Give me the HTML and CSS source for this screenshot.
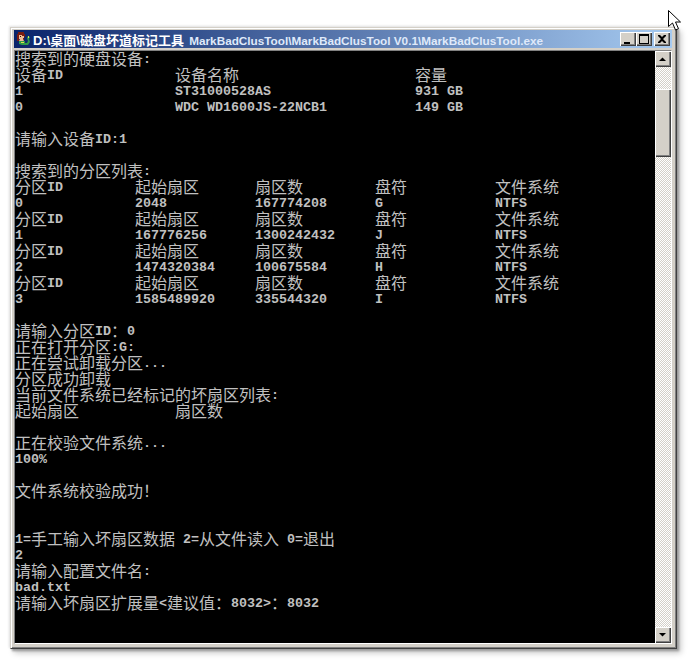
FILE: index.html
```html
<!DOCTYPE html>
<html lang="zh-CN">
<head>
<meta charset="utf-8">
<title>MarkBadClusTool</title>
<link rel="stylesheet" href="styles.css">
</head>
<body>
<div class="window">
  <div class="titlebar">
    <svg class="appicon" width="16" height="16" viewBox="0 0 16 16">
      <path d="M3 1h6v2h1v3H9v3H7V4H4v6H2V3h1z" fill="#7a1c10"/>
      <path d="M4 4h3v1h2v2H8v1l1 2H4l1-2H4z" fill="#f0bc94"/>
      <rect x="5" y="5" width="1" height="1" fill="#301008"/>
      <path d="M4 10h6v2h2l1-2-1-3 1-2 2 1-1 2 1 3-2 3H7l-3-1z" fill="#2f9a48"/>
      <path d="M13 5h1v2h-1zM6 11h3v1H6z" fill="#d8e050"/>
    </svg>
    <span class="titletext"><span class="tc">D:\桌面\磁盘坏道标记工具</span> MarkBadClusTool\MarkBadClusTool V0.1\MarkBadClusTool.exe</span>
    <div class="capbtns">
      <div class="capbtn"><svg width="16" height="14" viewBox="0 0 16 14"><rect x="4" y="10" width="6" height="2" fill="#000"/></svg></div>
      <div class="capbtn"><svg width="16" height="14" viewBox="0 0 16 14"><path d="M3 2h10v10H3z M4 4v7h8V4z" fill="#000" fill-rule="evenodd"/></svg></div>
      <div class="capbtn capclose"><svg width="16" height="14" viewBox="0 0 16 14"><path d="M4 3h2l2 2 2-2h2v1l-3 3 3 3v1h-2l-2-2-2 2H4v-1l3-3-3-3z" fill="#000"/></svg></div>
    </div>
  </div>
  <div class="client">
    <div class="console">
      <div class="ln"><i>搜索到的硬盘设备</i>:</div>
      <div class="ln"><i>设备</i>ID              <i>设备名称</i>                      <i>容量</i></div>
      <div class="ln">1                   ST31000528AS                  931 GB</div>
      <div class="ln">0                   WDC WD1600JS-22NCB1           149 GB</div>
      <div class="ln"></div>
      <div class="ln"><i>请输入设备</i>ID:1</div>
      <div class="ln"></div>
      <div class="ln"><i>搜索到的分区列表</i>:</div>
      <div class="ln"><i>分区</i>ID         <i>起始扇区</i>       <i>扇区数</i>         <i>盘符</i>           <i>文件系统</i></div>
      <div class="ln">0              2048           167774208      G              NTFS</div>
      <div class="ln"><i>分区</i>ID         <i>起始扇区</i>       <i>扇区数</i>         <i>盘符</i>           <i>文件系统</i></div>
      <div class="ln">1              167776256      1300242432     J              NTFS</div>
      <div class="ln"><i>分区</i>ID         <i>起始扇区</i>       <i>扇区数</i>         <i>盘符</i>           <i>文件系统</i></div>
      <div class="ln">2              1474320384     100675584      H              NTFS</div>
      <div class="ln"><i>分区</i>ID         <i>起始扇区</i>       <i>扇区数</i>         <i>盘符</i>           <i>文件系统</i></div>
      <div class="ln">3              1585489920     335544320      I              NTFS</div>
      <div class="ln"></div>
      <div class="ln"><i>请输入分区</i>ID<i>：</i>0</div>
      <div class="ln"><i>正在打开分区</i>:G:</div>
      <div class="ln"><i>正在尝试卸载分区</i>...</div>
      <div class="ln"><i>分区成功卸载</i></div>
      <div class="ln"><i>当前文件系统已经标记的坏扇区列表</i>:</div>
      <div class="ln"><i>起始扇区</i>            <i>扇区数</i></div>
      <div class="ln"></div>
      <div class="ln"><i>正在校验文件系统</i>...</div>
      <div class="ln">100%</div>
      <div class="ln"></div>
      <div class="ln"><i>文件系统校验成功！</i></div>
      <div class="ln"></div>
      <div class="ln"></div>
      <div class="ln">1=<i>手工输入坏扇区数据</i> 2=<i>从文件读入</i> 0=<i>退出</i></div>
      <div class="ln">2</div>
      <div class="ln"><i>请输入配置文件名</i>:</div>
      <div class="ln">bad.txt</div>
      <div class="ln"><i>请输入坏扇区扩展量</i>&lt;<i>建议值</i><i>：</i>8032&gt;<i>：</i>8032</div>
    </div>
    <div class="scrollbar">
      <div class="sbtn"><svg width="16" height="16" viewBox="0 0 16 16"><path d="M4 10h7L7.500 6.500z" fill="#000"/></svg></div>
      <div class="strack strack-top"></div>
      <div class="sthumb"></div>
      <div class="strack strack-bottom"></div>
      <div class="sbtn"><svg width="16" height="16" viewBox="0 0 16 16"><path d="M4 6h7L7.500 9.500z" fill="#000"/></svg></div>
    </div>
  </div>
</div>
<svg class="cursor" width="13" height="22" viewBox="0 0 13 22">
  <path d="M.5.500v16l4-3.500 3 7 3-1.300-3-6.700h5z" fill="#fff" stroke="#000"/>
</svg>
</body>
</html>
```

FILE: styles.css
```css
html, body {
  margin: 0;
  padding: 0;
  background: #fff;
}
body {
  width: 692px;
  height: 664px;
  overflow: hidden;
  position: relative;
}
.window {
  box-sizing: border-box;
  width: 667px;
  height: 622px;
  margin: 27px 0 0 10px;
  padding: 2px 4px 4px 3px;
  background: #d4d0c8;
  border: 1px solid;
  border-color: #d4d0c8 #404040 #404040 #d4d0c8;
  box-shadow: inset 1px 1px 0 #fff, inset -1px -1px 0 #808080, 2px 2px 2px #9a9a9a, 4px 4px 6px #c8c8c8, -1px -1px 2px #e4e4e4;
  display: flex;
  flex-direction: column;
}
.titlebar {
  height: 18px;
  flex: none;
  margin-bottom: 2px;
  display: flex;
  align-items: center;
  padding-left: 1px;
  background: linear-gradient(to right, #0a246a, #a6caf0);
  font-family: "Liberation Sans", "Noto Sans CJK SC", sans-serif;
  font-weight: bold;
  font-size: 11.75px;
  color: #fff;
  white-space: nowrap;
}
.appicon {
  flex: none;
  margin-right: 2px;
}
.titletext {
  flex: 1;
  color: #dfe9fa;
}
.tc {
  color: #fff;
  font-size: 13px;
  margin-right: 2px;
}
.capbtns {
  display: flex;
  flex: none;
  margin-right: 2px;
}
.capbtn {
  box-sizing: border-box;
  width: 16px;
  height: 14px;
  background: #d4d0c8;
  box-shadow: inset 1px 1px 0 #fff, inset -1px -1px 0 #404040, inset -2px -2px 0 #808080;
}
.capbtn svg {
  display: block;
}
.capclose {
  margin-left: 2px;
}
.client {
  flex: 1;
  min-height: 0;
  display: flex;
  border: 1px solid;
  border-color: #808080 #fff #fff #808080;
}
.console {
  flex: 1;
  box-sizing: border-box;
  background: #000;
  color: #c0c0c0;
  font-family: "Liberation Mono", monospace;
  font-weight: bold;
  font-size: 13.333px;
  line-height: 16px;
  overflow: hidden;
}
.ln {
  height: 16px;
  line-height: 18px;
  white-space: pre;
}
.ln i {
  font-family: "Noto Sans CJK SC", sans-serif;
  font-style: normal;
  font-weight: normal;
  font-size: 16px;
  line-height: 0;
  vertical-align: -2px;
}
.scrollbar {
  flex: none;
  width: 16px;
  display: flex;
  flex-direction: column;
}
.sbtn, .sthumb {
  box-sizing: border-box;
  background: #d4d0c8;
  box-shadow: inset 1px 1px 0 #fff, inset -1px -1px 0 #404040, inset -2px -2px 0 #808080;
}
.sbtn {
  flex: none;
  height: 16px;
}
.sbtn svg {
  display: block;
}
.sthumb {
  flex: none;
  height: 68px;
}
.strack {
  background-color: #fff;
  background-image: conic-gradient(#d4d0c8 25%, #fff 0 50%, #d4d0c8 0 75%, #fff 0);
  background-size: 2px 2px;
}
.strack-top {
  flex: none;
  height: 22px;
}
.strack-bottom {
  flex: 1;
}
.cursor {
  position: absolute;
  left: 668px;
  top: 10px;
}
```
